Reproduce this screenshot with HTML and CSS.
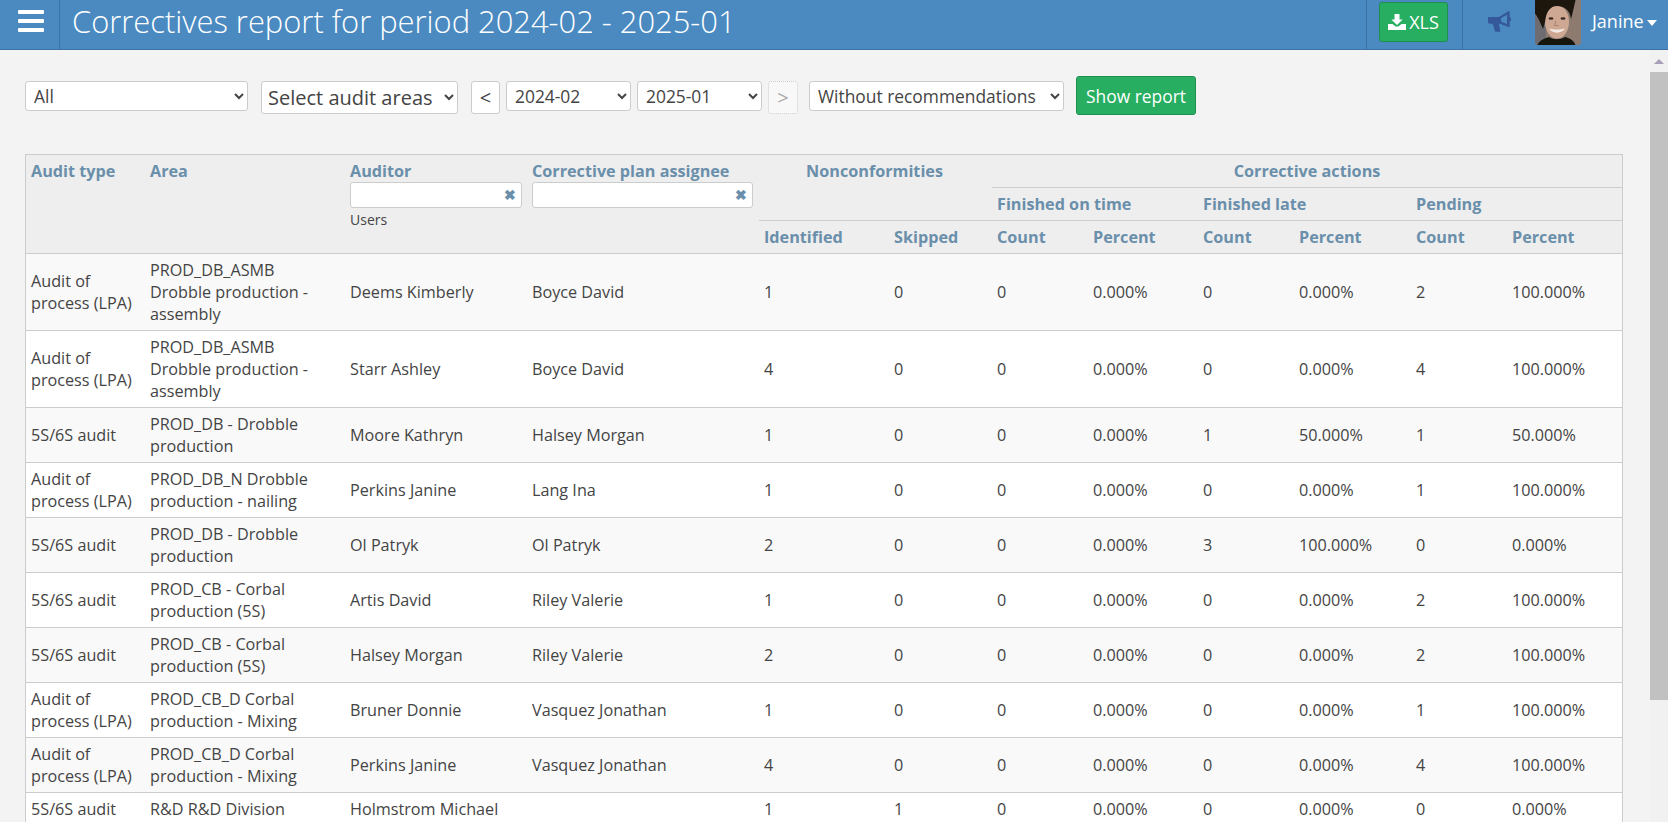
FILE: index.html
```html
<!DOCTYPE html>
<html lang="en">
<head>
<meta charset="utf-8">
<title>Correctives report</title>
<link rel="stylesheet" href="styles.css">
</head>
<body>
<header class="topbar">
  <button class="menu-btn" aria-label="Menu"><span></span><span></span><span></span></button>
  <h1 class="title">Correctives report for period 2024-02 - 2025-01</h1>
  <div class="export">
    <button class="xls">
      <svg class="xls-icon" viewBox="0 0 18 16"><path d="M6.500 0h5v5.500h3.200L9 11 3.300 5.500h3.200z"/><path d="M0 10h4.500L7.600 12.600h2.800L13.500 10H18V16H0z"/></svg>XLS
    </button>
  </div>
  <div class="news">
    <svg class="horn" viewBox="0 0 70 63"><path fill-rule="evenodd" d="M0 18H33L62 0h4v20h4v10h-4v18h-4L36 38h-3l5 25H22L14 38H3L0 34zM40 21v11l18 7V11z" fill="#35589a"/></svg>
  </div>
  <svg class="avatar" viewBox="0 0 46 45">
    <defs><filter id="soft"><feGaussianBlur stdDeviation="0.7"/></filter></defs>
    <rect width="46" height="45" fill="#8d7b70"/>
    <g filter="url(#soft)">
      <rect width="11" height="45" fill="#6e6c70"/>
      <ellipse cx="22" cy="22" rx="12" ry="16.500" fill="#cfa894"/>
      <path d="M-2-2H41C39 6 38 12 36 19 35 11 30 6 22 6 15 6 11 12 10 22L8 29C5 22 2 14-2 12Z" fill="#1a1411"/>
      <ellipse cx="16" cy="18.500" rx="2.500" ry="1.300" fill="#3a2a24"/>
      <ellipse cx="28" cy="18.500" rx="2.500" ry="1.300" fill="#3a2a24"/>
      <path d="M21 21l-1.500 4.500h4" stroke="#a87f6c" fill="none"/>
      <path d="M14 28.500c3 5.500 13 5.500 16 0-4 1.500-12 1.500-16 0z" fill="#f3ebe5"/>
      <path d="M2 47c1-6 6-8 12-10 4 3 11 3 16 0 5 1 10 4 11 10z" fill="#15120f"/>
    </g>
  </svg>
  <div class="user">Janine<i class="caret"></i></div>
</header>

<div class="page">
  <main class="content">
    <form class="filters">
      <select class="sel sel-all"><option>All</option></select>
      <select class="sel sel-areas"><option>Select audit areas</option></select>
      <button type="button" class="step">&lt;</button>
      <select class="sel sel-month"><option>2024-02</option></select>
      <select class="sel sel-month"><option>2025-01</option></select>
      <button type="button" class="step step-off">&gt;</button>
      <select class="sel sel-rec"><option>Without recommendations</option></select>
      <button type="button" class="show">Show report</button>
    </form>

    <table class="report">
      <colgroup>
        <col class="c1"><col class="c2"><col class="c3"><col class="c4"><col class="c5"><col class="c6">
        <col class="c7"><col class="c8"><col class="c7"><col class="c9"><col class="c7"><col class="c10">
      </colgroup>
      <thead>
        <tr>
          <th rowspan="3">Audit type</th>
          <th rowspan="3">Area</th>
          <th rowspan="3">Auditor
            <div class="search"><i>&#10006;</i></div>
            <small>Users</small>
          </th>
          <th rowspan="3" class="assignee">Corrective plan assignee
            <div class="search"><i>&#10006;</i></div>
          </th>
          <th rowspan="2" colspan="2" class="center nonconf">Nonconformities</th>
          <th colspan="6" class="center top">Corrective actions</th>
        </tr>
        <tr>
          <th colspan="2" class="lined">Finished on time</th>
          <th colspan="2" class="lined">Finished late</th>
          <th colspan="2" class="lined">Pending</th>
        </tr>
        <tr>
          <th class="lined">Identified</th><th class="lined">Skipped</th>
          <th class="lined">Count</th><th class="lined">Percent</th>
          <th class="lined">Count</th><th class="lined">Percent</th>
          <th class="lined">Count</th><th class="lined">Percent</th>
        </tr>
      </thead>
      <tbody>
        <tr><td>Audit of process (LPA)</td><td>PROD_DB_ASMB Drobble production - assembly</td><td>Deems Kimberly</td><td>Boyce David</td><td>1</td><td>0</td><td>0</td><td>0.000%</td><td>0</td><td>0.000%</td><td>2</td><td>100.000%</td></tr>
        <tr><td>Audit of process (LPA)</td><td>PROD_DB_ASMB Drobble production - assembly</td><td>Starr Ashley</td><td>Boyce David</td><td>4</td><td>0</td><td>0</td><td>0.000%</td><td>0</td><td>0.000%</td><td>4</td><td>100.000%</td></tr>
        <tr><td>5S/6S audit</td><td>PROD_DB - Drobble production</td><td>Moore Kathryn</td><td>Halsey Morgan</td><td>1</td><td>0</td><td>0</td><td>0.000%</td><td>1</td><td>50.000%</td><td>1</td><td>50.000%</td></tr>
        <tr><td>Audit of process (LPA)</td><td>PROD_DB_N Drobble production - nailing</td><td>Perkins Janine</td><td>Lang Ina</td><td>1</td><td>0</td><td>0</td><td>0.000%</td><td>0</td><td>0.000%</td><td>1</td><td>100.000%</td></tr>
        <tr><td>5S/6S audit</td><td>PROD_DB - Drobble production</td><td>Ol Patryk</td><td>Ol Patryk</td><td>2</td><td>0</td><td>0</td><td>0.000%</td><td>3</td><td>100.000%</td><td>0</td><td>0.000%</td></tr>
        <tr><td>5S/6S audit</td><td>PROD_CB - Corbal production (5S)</td><td>Artis David</td><td>Riley Valerie</td><td>1</td><td>0</td><td>0</td><td>0.000%</td><td>0</td><td>0.000%</td><td>2</td><td>100.000%</td></tr>
        <tr><td>5S/6S audit</td><td>PROD_CB - Corbal production (5S)</td><td>Halsey Morgan</td><td>Riley Valerie</td><td>2</td><td>0</td><td>0</td><td>0.000%</td><td>0</td><td>0.000%</td><td>2</td><td>100.000%</td></tr>
        <tr><td>Audit of process (LPA)</td><td>PROD_CB_D Corbal production - Mixing</td><td>Bruner Donnie</td><td>Vasquez Jonathan</td><td>1</td><td>0</td><td>0</td><td>0.000%</td><td>0</td><td>0.000%</td><td>1</td><td>100.000%</td></tr>
        <tr><td>Audit of process (LPA)</td><td>PROD_CB_D Corbal production - Mixing</td><td>Perkins Janine</td><td>Vasquez Jonathan</td><td>4</td><td>0</td><td>0</td><td>0.000%</td><td>0</td><td>0.000%</td><td>4</td><td>100.000%</td></tr>
        <tr><td>5S/6S audit</td><td>R&amp;D R&amp;D Division</td><td>Holmstrom Michael</td><td></td><td>1</td><td>1</td><td>0</td><td>0.000%</td><td>0</td><td>0.000%</td><td>0</td><td>0.000%</td></tr>
      </tbody>
    </table>
  </main>
  <div class="scrollbar">
    <div class="sb-up"></div>
    <div class="sb-thumb"></div>
  </div>
</div>
</body>
</html>
```
FILE: styles.css
```css
* { box-sizing: border-box; }
html, body { margin: 0; height: 100%; overflow: hidden; }
body {
  display: flex;
  flex-direction: column;
  font-family: "Open Sans", sans-serif;
  font-size: 16.2px;
  line-height: 22px;
  color: #444;
  background: #f3f3f3;
}

.topbar {
  flex: none;
  height: 50px;
  display: flex;
  align-items: stretch;
  background: #4a8ac1;
  border-bottom: 1px solid #3a72a4;
  color: #fff;
}
.menu-btn {
  width: 60px;
  flex: none;
  padding: 10px 15px 0 18px;
  display: flex;
  flex-direction: column;
  gap: 5px;
  background: none;
  border: 0;
  border-right: 1px solid #3a72a4;
}
.menu-btn span { display: block; width: 26px; height: 4px; border-radius: 1px; background: #fff; }
.title {
  flex: 1;
  margin: 0;
  padding-left: 12px;
  font-weight: 300;
  font-size: 30.900px;
  line-height: 43px;
  white-space: nowrap;
}
.export {
  width: 97px;
  flex: none;
  padding: 2px 0 0 12px;
  border-left: 1px solid #3a72a4;
  border-right: 1px solid #3a72a4;
}
.xls {
  width: 69px;
  height: 40px;
  padding: 0;
  display: flex;
  align-items: center;
  justify-content: center;
  gap: 3px;
  font: 400 18px "Open Sans", sans-serif;
  color: #fff;
  background: #27ae60;
  border: 1px solid #1f8f4f;
  border-radius: 3px;
}
.xls-icon { width: 18px; height: 16px; fill: #fff; }
.news { width: 72px; flex: none; display: flex; align-items: center; padding: 0 0 6px 25px; }
.horn { width: 23px; height: 21px; }
.avatar { width: 46px; height: 45px; flex: none; border-radius: 0 0 3px 3px; }
.user {
  width: 87px;
  flex: none;
  padding-left: 11px;
  font-size: 18px;
  line-height: 42px;
  white-space: nowrap;
}
.caret {
  display: inline-block;
  margin-left: 3px;
  vertical-align: middle;
  border-top: 6px solid #fff;
  border-left: 5.500px solid transparent;
  border-right: 5.500px solid transparent;
}

.page { flex: 1; min-height: 0; display: flex; }
.content { flex: 1; min-width: 0; overflow: hidden; padding: 26px 0 0 25px; }

.filters { height: 78px; display: flex; align-items: flex-start; }
.sel {
  height: 30px;
  margin-top: 5px;
  padding: 0 4px;
  font: 400 17.400px "Open Sans", sans-serif;
  color: #444;
  background: #fff;
  border: 1px solid #ccc;
  border-radius: 3px;
}
.sel-all { width: 223px; margin-right: 13px; }
.sel-areas { width: 197px; height: 33px; margin-right: 12px; font-size: 20px; padding: 0 0 0 2px; }
.sel-month { width: 125px; margin-right: 6px; }
.sel-rec { width: 255px; margin-left: 11px; margin-right: 12px; }
.step {
  width: 29px;
  height: 33px;
  margin: 5px 6px 0 1px;
  padding: 0;
  font: 400 20px "Open Sans", sans-serif;
  color: #444;
  background: #fff;
  border: 1px solid #ccc;
  border-radius: 3px;
}
.step-off { width: 30px; margin: 5px 0 0; color: #aaa; background: #f8f8f8; border: 1px dotted #ccc; }
.show {
  width: 120px;
  height: 39px;
  padding: 0;
  font: 400 17.400px "Open Sans", sans-serif;
  color: #fff;
  background: #27ae60;
  border: 1px solid #1f8f4f;
  border-radius: 3px;
}

.report {
  width: 1598px;
  table-layout: fixed;
  border-collapse: separate;
  border-spacing: 0;
  border: 1px solid #ccc;
}
.c1 { width: 119px; } .c2 { width: 200px; } .c3 { width: 182px; } .c4 { width: 232px; }
.c5 { width: 130px; } .c6 { width: 103px; } .c7 { width: 96px; } .c8 { width: 110px; } .c9 { width: 117px; } .c10 { width: 115px; }
.report th {
  padding: 5px 5px 0;
  height: 33px;
  font-weight: 700;
  font-size: 16.200px;
  color: #6a8fab;
  text-align: left;
  vertical-align: top;
  background: #eee;
}
.report th.top { height: 32px; }
.report th.center { text-align: center; }
.report th.nonconf { padding-right: 7px; }
.report th.assignee { padding-right: 6px; }
.report th.lined { border-top: 1px solid #ccc; }
.search {
  position: relative;
  height: 26px;
  margin: 0 0 3px;
  background: #fff;
  border: 1px solid #ccc;
  border-radius: 3px;
}
.search i {
  position: absolute;
  right: 5px;
  top: 1px;
  font-style: normal;
  font-size: 14px;
  color: #6a8fab;
}
.report small { display: block; font-size: 14px; font-weight: 400; line-height: 18px; color: #444; }
.report td { padding: 5px; vertical-align: middle; border-top: 1px solid #ccc; background: #fff; }
.report td:nth-child(2) { padding-right: 25px; }
.report tbody tr:nth-child(odd) td { background: #f9f9f9; }

.scrollbar { width: 18px; flex: none; margin-left: 27px; background: #f1f1f1; display: flex; flex-direction: column; }
.sb-up { height: 22px; position: relative; }
.sb-up::after {
  content: "";
  position: absolute;
  left: 4px;
  top: 9px;
  border-bottom: 5px solid #a8a0b8;
  border-left: 5px solid transparent;
  border-right: 5px solid transparent;
}
.sb-thumb { height: 628px; background: #c1c1c1; }
```
